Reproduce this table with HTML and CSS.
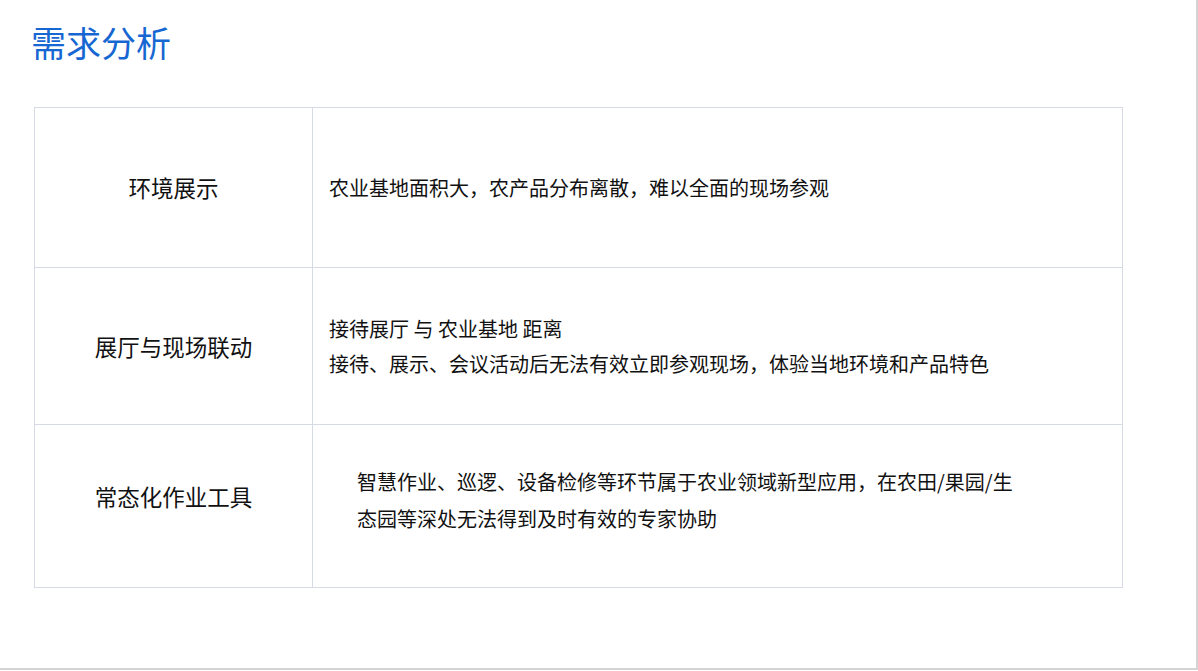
FILE: index.html
```html
<!DOCTYPE html>
<html lang="zh-CN">
<head>
  <meta charset="UTF-8" />
  <meta name="viewport" content="width=device-width, initial-scale=1.0"/>
  <title>需求分析</title>
  <link rel="stylesheet" href="styles.css">
</head>
<body>

<div class="slide">
  <h1 class="titulo">需求分析</h1>

  <table class="tabla">
    <tr class="fila1">
      <td class="etiqueta">环境展示</td>
      <td class="detalle">
        <p>农业基地面积大，农产品分布离散，难以全面的现场参观</p>
      </td>
    </tr>
    <tr class="fila2">
      <td class="etiqueta">展厅与现场联动</td>
      <td class="detalle">
        <p>接待展厅 与 农业基地 距离</p>
        <p>接待、展示、会议活动后无法有效立即参观现场，体验当地环境和产品特色</p>
      </td>
    </tr>
    <tr class="fila3">
      <td class="etiqueta">常态化作业工具</td>
      <td class="detalle">
        <p class="sangria">智慧作业、巡逻、设备检修等环节属于农业领域新型应用，在农田/果园/生态园等深处无法得到及时有效的专家协助</p>
      </td>
    </tr>
  </table>
</div>

</body>
</html>
```

FILE: styles.css
```css
body {
  margin: 0;
  padding: 0;
  background-color: #ffffff;
  font-family: "Noto Sans CJK SC", "Noto Sans", sans-serif;
  color: #111111;
}

.slide {
  width: 1196px;
  height: 668px;
  border-right: 2px solid #d4d4d4;
  border-bottom: 2px solid #d4d4d4;
  overflow: hidden;
}

.titulo {
  margin: 0;
  padding: 20px 0 0 31px;
  font-size: 35px;
  line-height: 44px;
  font-weight: normal;
  color: #1767d2;
  height: 87px;
  box-sizing: border-box;
}

.tabla {
  margin: 20px 0 0 34px;
  border-collapse: collapse;
  width: 1089px;
  table-layout: fixed;
}

.tabla td {
  border: 1px solid #d5dae5;
  vertical-align: middle;
  padding: 0;
}

.fila1 { height: 160px; }
.fila2 { height: 157px; }
.fila3 { height: 163px; }

.etiqueta {
  width: 277px;
  text-align: center;
  font-size: 22.5px;
}

.fila1 .etiqueta { padding-bottom: 2px !important; }
.fila3 .etiqueta { padding-bottom: 20px !important; }

.detalle {
  padding-left: 16px !important;
  font-size: 20px;
}

.detalle p {
  margin: 0;
  line-height: 35px;
}

.fila3 .detalle {
  padding-bottom: 12px !important;
}

.sangria {
  padding-left: 28px;
  max-width: 668px;
  line-height: 37px !important;
}
```
